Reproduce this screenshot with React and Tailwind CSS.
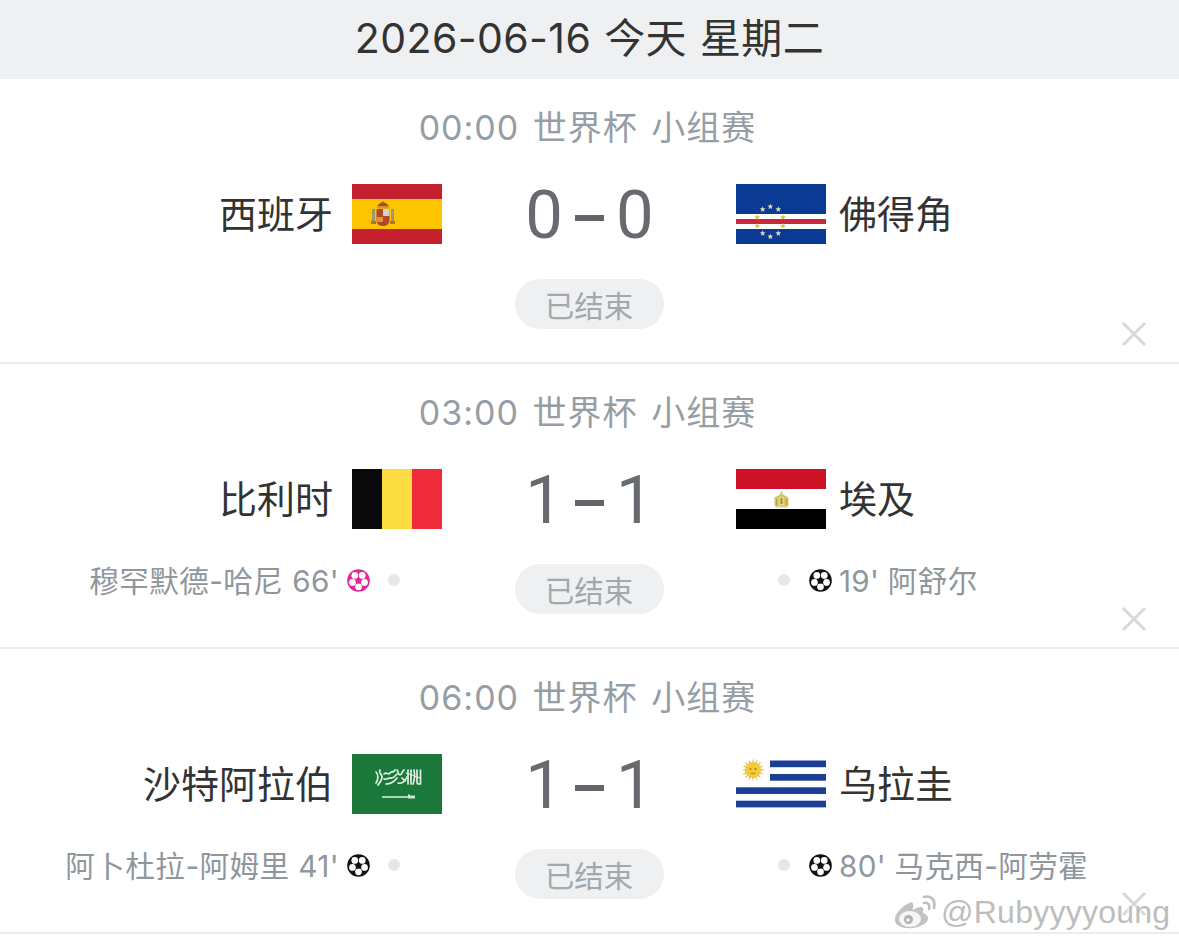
const cjk = 'font-["Inter","Noto_Sans_CJK_SC",sans-serif]';

function Ball({ color = "#111111" }) {
  const patches = [-126, -54, 18, 90, 162].map((a) => [
    12 + 6.6 * Math.cos((a * Math.PI) / 180),
    12 + 6.6 * Math.sin((a * Math.PI) / 180),
  ]);
  return (
    <svg width="23" height="23" viewBox="0 0 24 24" className="block shrink-0">
      <circle cx="12" cy="12" r="11.8" fill={color} />
      {patches.map(([x, y], i) => (
        <circle key={i} cx={x} cy={y} r="3.5" fill="#fff" />
      ))}
      <polygon points="12,8.6 15.2,11 14,14.8 10,14.8 8.8,11" fill={color} />
    </svg>
  );
}

function Star({ x, y, r = 3, fill = "#f3c44a" }) {
  const pts = Array.from({ length: 10 }, (_, i) => {
    const a = (-90 + i * 36) * (Math.PI / 180);
    const d = i % 2 ? r * 0.45 : r;
    return `${x + d * Math.cos(a)},${y + d * Math.sin(a)}`;
  }).join(" ");
  return <polygon points={pts} fill={fill} />;
}

function Spain() {
  return (
    <svg width="90" height="60" viewBox="0 0 90 60" className="block shrink-0">
      <rect width="90" height="60" fill="#c5202e" />
      <rect y="15" width="90" height="30" fill="#fdc400" />
      <rect x="20" y="25" width="3" height="13" fill="#9c9a74" />
      <rect x="39" y="25" width="3" height="13" fill="#9c9a74" />
      <rect x="19" y="37" width="5" height="3" fill="#b0762a" />
      <rect x="38" y="37" width="5" height="3" fill="#b0762a" />
      <path d="M24.500 25h13v11c0 4-3 6-6.500 6s-6.500-2-6.500-6z" fill="#b5452c" />
      <rect x="31" y="25" width="6.500" height="7" fill="#d9cdc6" />
      <rect x="24.500" y="33" width="6.500" height="5" fill="#d8963a" />
      <path d="M25.500 23c0-6 11-6 11 0z" fill="#a8482a" />
      <rect x="25" y="22" width="12" height="2.500" fill="#c89a30" />
      <circle cx="31" cy="18.500" r="1.200" fill="#b06a2a" />
    </svg>
  );
}

function CapeVerde() {
  const stars = [
    [26.700, 25.300, "#dcd8b8"],
    [34.300, 22.700, "#dcd8b8"],
    [42.300, 25.300, "#dcd8b8"],
    [21.300, 33.300, "#eeb64a"],
    [47, 33.300, "#eeb64a"],
    [21.300, 42, "#eeb64a"],
    [47, 42, "#eeb64a"],
    [26.700, 49.300, "#dcd8b8"],
    [34.300, 52.700, "#dcd8b8"],
    [42.300, 49.300, "#dcd8b8"],
  ];
  return (
    <svg width="90" height="60" viewBox="0 0 90 60" className="block shrink-0">
      <rect width="90" height="60" fill="#0b3a94" />
      <rect y="30" width="90" height="15" fill="#fff" />
      <rect y="35" width="90" height="5" fill="#c52a3a" />
      {stars.map(([x, y, f], i) => (
        <Star key={i} x={x} y={y} fill={f} />
      ))}
    </svg>
  );
}

function Belgium() {
  return (
    <svg width="90" height="60" viewBox="0 0 90 60" className="block shrink-0">
      <rect width="30" height="60" fill="#0a0a0a" />
      <rect x="30" width="30" height="60" fill="#fbdd41" />
      <rect x="60" width="30" height="60" fill="#ee2a3b" />
    </svg>
  );
}

function Egypt() {
  return (
    <svg width="90" height="60" viewBox="0 0 90 60" className="block shrink-0">
      <rect width="90" height="20" fill="#ce1126" />
      <rect y="20" width="90" height="20" fill="#fff" />
      <rect y="40" width="90" height="20" fill="#000" />
      <path d="M45.500 21.500l1.500 4 5.500 3v8l-2.500 2.500h-9l-2.500-2.500v-8l5.500-3z" fill="#d8c468" />
      <path d="M43.500 28h4v8h-4z" fill="#f5efc9" />
      <path d="M44.700 29h1.600v6h-1.600zM40.500 30v6M50.500 30v6" stroke="#ae9238" strokeWidth="0.800" fill="#ae9238" />
      <rect x="41" y="37.500" width="9" height="1.500" fill="#efe5a8" />
    </svg>
  );
}

function Saudi() {
  return (
    <svg width="90" height="60" viewBox="0 0 90 60" className="block shrink-0">
      <rect width="90" height="60" fill="#19783a" />
      <g fill="none" stroke="#e4efe4" strokeWidth="1.700" strokeLinecap="round">
        <path d="M24 18c3 3 2 8 0 11M28 16c-2 4 3 4 2 8s-3 5-4 7" />
        <path d="M32 20c3-3 4 2 6-1s3 1 5-3M32 25c3 1 5-2 7-1s4-2 6-4M34 30c4 0 8-2 11-6" />
        <path d="M45 16c2 3 1 5 3 5s2-4 4-5M46 29c3 1 7-1 9-6M50 24l3 3" />
        <path d="M56 16v14M59 16v14M62 16c1 5 1 9-1 14M65 16v12c0 1 1 2 2 2M68.500 16v14" />
        <path d="M54 19l14 5" strokeWidth="1" />
      </g>
      <rect x="30" y="42.300" width="26" height="1.400" fill="#f0f6f0" />
      <rect x="56" y="40.500" width="2" height="4" fill="#d8e8d8" />
      <rect x="58" y="41.500" width="5" height="3" fill="#d0e2d0" />
    </svg>
  );
}

function Uruguay() {
  const rays = Array.from({ length: 16 }, (_, i) => (i * 360) / 16);
  return (
    <svg width="90" height="60" viewBox="0 0 90 60" className="block shrink-0">
      <rect width="90" height="60" fill="#fff" />
      <rect x="34" y="6.500" width="56" height="6.700" fill="#1c3f94" />
      <rect x="34" y="20" width="56" height="6.700" fill="#1c3f94" />
      <rect y="33.300" width="90" height="6.700" fill="#1c3f94" />
      <rect y="46.700" width="90" height="6.700" fill="#1c3f94" />
      {rays.map((a, i) => (
        <polygon key={i} points="15.400,16 18.600,16 17,4" fill="#c9a233" transform={`rotate(${a} 17 16)`} />
      ))}
      <circle cx="17" cy="16" r="8" fill="#f2cb38" />
      <circle cx="14.500" cy="15" r="0.900" fill="#9c741c" />
      <circle cx="19.500" cy="15" r="0.900" fill="#9c741c" />
      <path d="M14.500 19c1.500 1 3.500 1 5 0" stroke="#9c741c" strokeWidth="0.800" fill="none" />
    </svg>
  );
}

function Close() {
  return (
    <svg width="26" height="26" viewBox="0 0 26 26" className="absolute right-[32px] bottom-[15px]">
      <path d="M2 2L24 24M24 2L2 24" stroke="#d6d8da" strokeWidth="3" />
    </svg>
  );
}

function Dot() {
  return <span className="size-[12px] shrink-0 rounded-full bg-[#e6e7ea]" />;
}

function Match({ time, home, away, homeFlag, awayFlag, score, homeScorer, awayScorer, pink }) {
  return (
    <div className="relative h-[285px] border-b-2 border-[#ededee] bg-white">
      <div className="pt-[25px] pr-[4px] text-center text-[34px] leading-[48px] tracking-[1px] text-[#969da4] [word-spacing:3px]">
        {time} 世界杯 小组赛
      </div>
      <div className="mt-[32px] grid h-[60px] grid-cols-[442px_294px_1fr]">
        <div className="flex items-center justify-end gap-[19px]">
          <span className="pt-[1px] text-[38px] leading-[59px] text-[#333333]">{home}</span>
          {homeFlag}
        </div>
        <div className="flex h-[60px] items-center justify-center gap-[12px] pt-[2px] pl-[1px] font-['Roboto'] text-[67px] leading-[58px] font-normal text-[#676b6f]">
          <span>{score[0]}</span>
          <span className="h-[6px] w-[29px] translate-y-[3px] bg-[#62666a]" />
          <span>{score[1]}</span>
        </div>
        <div className="flex items-center gap-[13px]">
          {awayFlag}
          <span className="pt-[1px] text-[38px] leading-[59px] text-[#333333]">{away}</span>
        </div>
      </div>
      <div className="mt-[35px] grid grid-cols-[442px_294px_1fr] items-start text-[29.650px] leading-[32px] text-[#8f969c]">
        <div className="flex h-[32px] items-center justify-end pr-[42px]">
          {homeScorer && (
            <>
              <span className="whitespace-nowrap pt-[1px] tracking-[0.4px]">{homeScorer}</span>
              <span className="ml-[8px]"><Ball color={pink ? "#e2279a" : "#111111"} /></span>
              <span className="ml-[18px] flex"><Dot /></span>
            </>
          )}
        </div>
        <div className="flex justify-center">
          <div className="flex h-[50px] w-[149px] items-center justify-center rounded-full bg-[#eef0f2] pt-[3px] text-[29.500px] text-[#a1a8ae]">
            已结束
          </div>
        </div>
        <div className="flex h-[32px] items-center pl-[42px]">
          {awayScorer && (
            <>
              <Dot />
              <span className="ml-[19px]"><Ball /></span>
              <span className="ml-[7px] whitespace-nowrap pt-[1px] tracking-[0.3px]">{awayScorer}</span>
            </>
          )}
        </div>
      </div>
      <Close />
    </div>
  );
}

function Weibo() {
  return (
    <svg width="48" height="38" viewBox="0 0 48 38" className="shrink-0">
      <path d="M20 8C10 12 2 21 3 28c1 7 11 9 19 8 9-1 17-6 16-12-1-3-4-4-5-5 1-3 0-6-3-6-2 0-5 1-7 2 1-3 0-7-3-7z" fill="#c2c2c2" stroke="#fff" strokeWidth="2" />
      <ellipse cx="19" cy="26" rx="11" ry="8" fill="#f6f6f6" />
      <circle cx="17.500" cy="26.500" r="4.500" fill="#b0b0b0" />
      <circle cx="17" cy="27" r="1.800" fill="#f6f6f6" />
      <path d="M33 10c4-1 6 2 5 6M33 4c7-2 12 3 10 11" fill="none" stroke="#bdbdbd" strokeWidth="2.600" strokeLinecap="round" />
    </svg>
  );
}

export default function App() {
  return (
    <div className={`relative h-[944px] w-[1179px] overflow-hidden bg-white ${cjk}`}>
      <div className="flex h-[79px] items-center justify-center bg-[#eff0f2] pb-[3px] text-[41px] leading-[60px] tracking-[0.4px] text-[#333333] [word-spacing:1px]">
        2026-06-16 今天 星期二
      </div>
      <Match
        time="00:00"
        home="西班牙"
        away="佛得角"
        homeFlag={<Spain />}
        awayFlag={<CapeVerde />}
        score={["0", "0"]}
      />
      <Match
        time="03:00"
        home="比利时"
        away="埃及"
        homeFlag={<Belgium />}
        awayFlag={<Egypt />}
        score={["1", "1"]}
        homeScorer="穆罕默德-哈尼 66'"
        awayScorer="19' 阿舒尔"
        pink
      />
      <Match
        time="06:00"
        home="沙特阿拉伯"
        away="乌拉圭"
        homeFlag={<Saudi />}
        awayFlag={<Uruguay />}
        score={["1", "1"]}
        homeScorer="阿卜杜拉-阿姆里 41'"
        awayScorer="80' 马克西-阿劳霍"
      />
      <div className="absolute top-[892px] left-[891px] flex items-center gap-[2px]">
        <Weibo />
        <span className="font-['Liberation_Sans'] text-[32px] leading-[40px] tracking-[0.25px] text-[#bdbdbd] [text-shadow:0_0_2px_#fff,0_0_2px_#fff,0_0_3px_#fff]">
          @Rubyyyyoung
        </span>
      </div>
    </div>
  );
}
